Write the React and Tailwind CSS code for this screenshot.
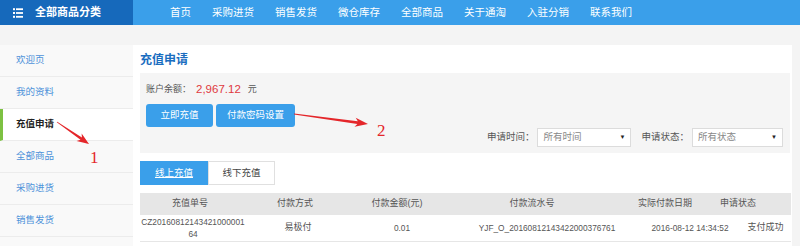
const navs = ["首页", "采购进货", "销售发货", "微仓库存", "全部商品", "关于通淘", "入驻分销", "联系我们"];
const side = ["欢迎页", "我的资料", "充值申请", "全部商品", "采购进货", "销售发货"];

function MenuIcon() {
  return (
    <svg width="10" height="10" viewBox="0 0 10 10" fill="#fff">
      <rect x="0" y="0.2" width="2" height="2" />
      <rect x="3" y="0.3" width="7" height="1.8" />
      <rect x="0" y="4" width="2" height="2" />
      <rect x="3" y="4.1" width="7" height="1.8" />
      <rect x="0" y="7.8" width="2" height="2" />
      <rect x="3" y="7.9" width="7" height="1.8" />
    </svg>
  );
}

function Select({ w, text }) {
  return (
    <div className={`${w} h-[19px] bg-white border border-[#dcdcdc] flex items-center justify-between pl-[5px] pr-[5px] text-[#888] text-[9.5px]`}>
      <span>{text}</span>
      <span className="text-[#222] text-[6px]">▼</span>
    </div>
  );
}

export default function App() {
  return (
    <div className="relative w-[800px] h-[246px] overflow-hidden bg-[#f4f4f4] font-['Liberation_Sans','Noto_Sans_CJK_SC',sans-serif]">
      <header className="flex h-[25px]">
        <div className="w-[133px] bg-[#1669bb] flex items-center pl-[13px] gap-[12px] text-white">
          <MenuIcon />
          <span className="text-[11px] font-bold">全部商品分类</span>
        </div>
        <nav className="flex-1 bg-[#3a9fea] flex items-center pl-[37px] gap-[21px] text-white text-[10.5px]">
          {navs.map((n) => (
            <span key={n}>{n}</span>
          ))}
        </nav>
      </header>

      <div className="flex mt-[20px]">
        <aside className="w-[133px] h-[201px] bg-[#f9f9f9]">
          {side.map((s) =>
            s === "充值申请" ? (
              <div key={s} className="h-[32px] border-b border-[#ececec] bg-white border-l-[3px] border-l-[#7dc142] pl-[13px] flex items-center text-[9.5px] font-bold text-[#222]">
                {s}
              </div>
            ) : (
              <div key={s} className="h-[32px] border-b border-[#ececec] pl-[16px] flex items-center text-[9.5px] text-[#4d92d9]">
                {s}
              </div>
            )
          )}
        </aside>

        <main className="w-[659px] h-[201px] bg-white pl-[7px] pr-[1px]">
          <h1 className="mt-[7px] h-[16px] leading-[16px] text-[12px] font-bold text-[#1a6dbf]">充值申请</h1>

          <div className="mt-[5px] mr-[1px] h-[80px] bg-[#f5f5f5] pl-[6px] pr-[7px] pt-[10px] flex flex-col">
            <div className="h-[14px] flex items-center text-[9px] text-[#555]">
              <span>账户余额：</span>
              <span className="ml-[5px] text-[11.5px] text-[#e0393e]">2,967.12</span>
              <span className="ml-[7px]">元</span>
            </div>
            <div className="mt-[7px] flex gap-[3px]">
              <button className="w-[67px] h-[23px] rounded-[3px] bg-[#3a9fea] text-white text-[9.5px]">立即充值</button>
              <button className="w-[79px] h-[23px] rounded-[3px] bg-[#3a9fea] text-white text-[9.5px]">付款密码设置</button>
            </div>
            <div className="mt-[1px] h-[19px] flex justify-end items-center text-[9.5px] text-[#555]">
              <span>申请时间：</span>
              <div className="ml-[3px]">
                <Select w="w-[94px]" text="所有时间" />
              </div>
              <span className="ml-[10px]">申请状态：</span>
              <div className="ml-[3px]">
                <Select w="w-[91px]" text="所有状态" />
              </div>
            </div>
          </div>

          <div className="mt-[8px] flex h-[24px] text-[9.5px]">
            <div className="w-[68px] bg-[#3a9fea] text-white underline flex items-center justify-center">线上充值</div>
            <div className="w-[67px] border border-[#e0e0e0] bg-white text-[#444] flex items-center justify-center">线下充值</div>
          </div>

          <div className="mt-[8px] w-[651px]">
            <div className="h-[22px] bg-[#e6e6e6] grid grid-cols-[100px_110px_94px_176px_90px_56px_1fr] items-center text-center text-[9px] text-[#555]">
              <span>充值单号</span>
              <span>付款方式</span>
              <span>付款金额(元)</span>
              <span>付款流水号</span>
              <span>实际付款日期</span>
              <span>申请状态</span>
              <span></span>
            </div>
            <div className="h-[27px] border-b border-[#e6e6e6] grid grid-cols-[106px_104px_104px_186px_100px_51px] items-center text-center text-[9px] text-[#555]">
              <span className="text-[8.3px] leading-[12px]">
                CZ20160812143421000001
                <br />
                64
              </span>
              <span>易极付</span>
              <span className="text-[8.3px]">0.01</span>
              <span className="text-[8.3px]">YJF_O_20160812143422000376761</span>
              <span className="text-[8.3px]">2016-08-12 14:34:52</span>
              <span>支付成功</span>
            </div>
          </div>
        </main>
      </div>

      <svg className="absolute inset-0 pointer-events-none" width="800" height="246" viewBox="0 0 800 246">
        <polygon
          fill="#e4262a"
          points="56.77,122.33 80.5,139.7 76.55,140.9 89,144 81.65,133.5 81.9,137.5 57.23,121.67"
        />
        <polygon
          fill="#e4262a"
          points="293.95,114.4 357.4,123.9 354.5,126.7 368,124 355.7,117.8 357.8,121.3 294.05,113.6"
        />
      </svg>
      <span className="absolute left-[90px] top-[149px] text-[17px] leading-none text-[#e4262a] font-['Liberation_Serif',serif]">1</span>
      <span className="absolute left-[377px] top-[122px] text-[17px] leading-none text-[#e4262a] font-['Liberation_Serif',serif]">2</span>
    </div>
  );
}
